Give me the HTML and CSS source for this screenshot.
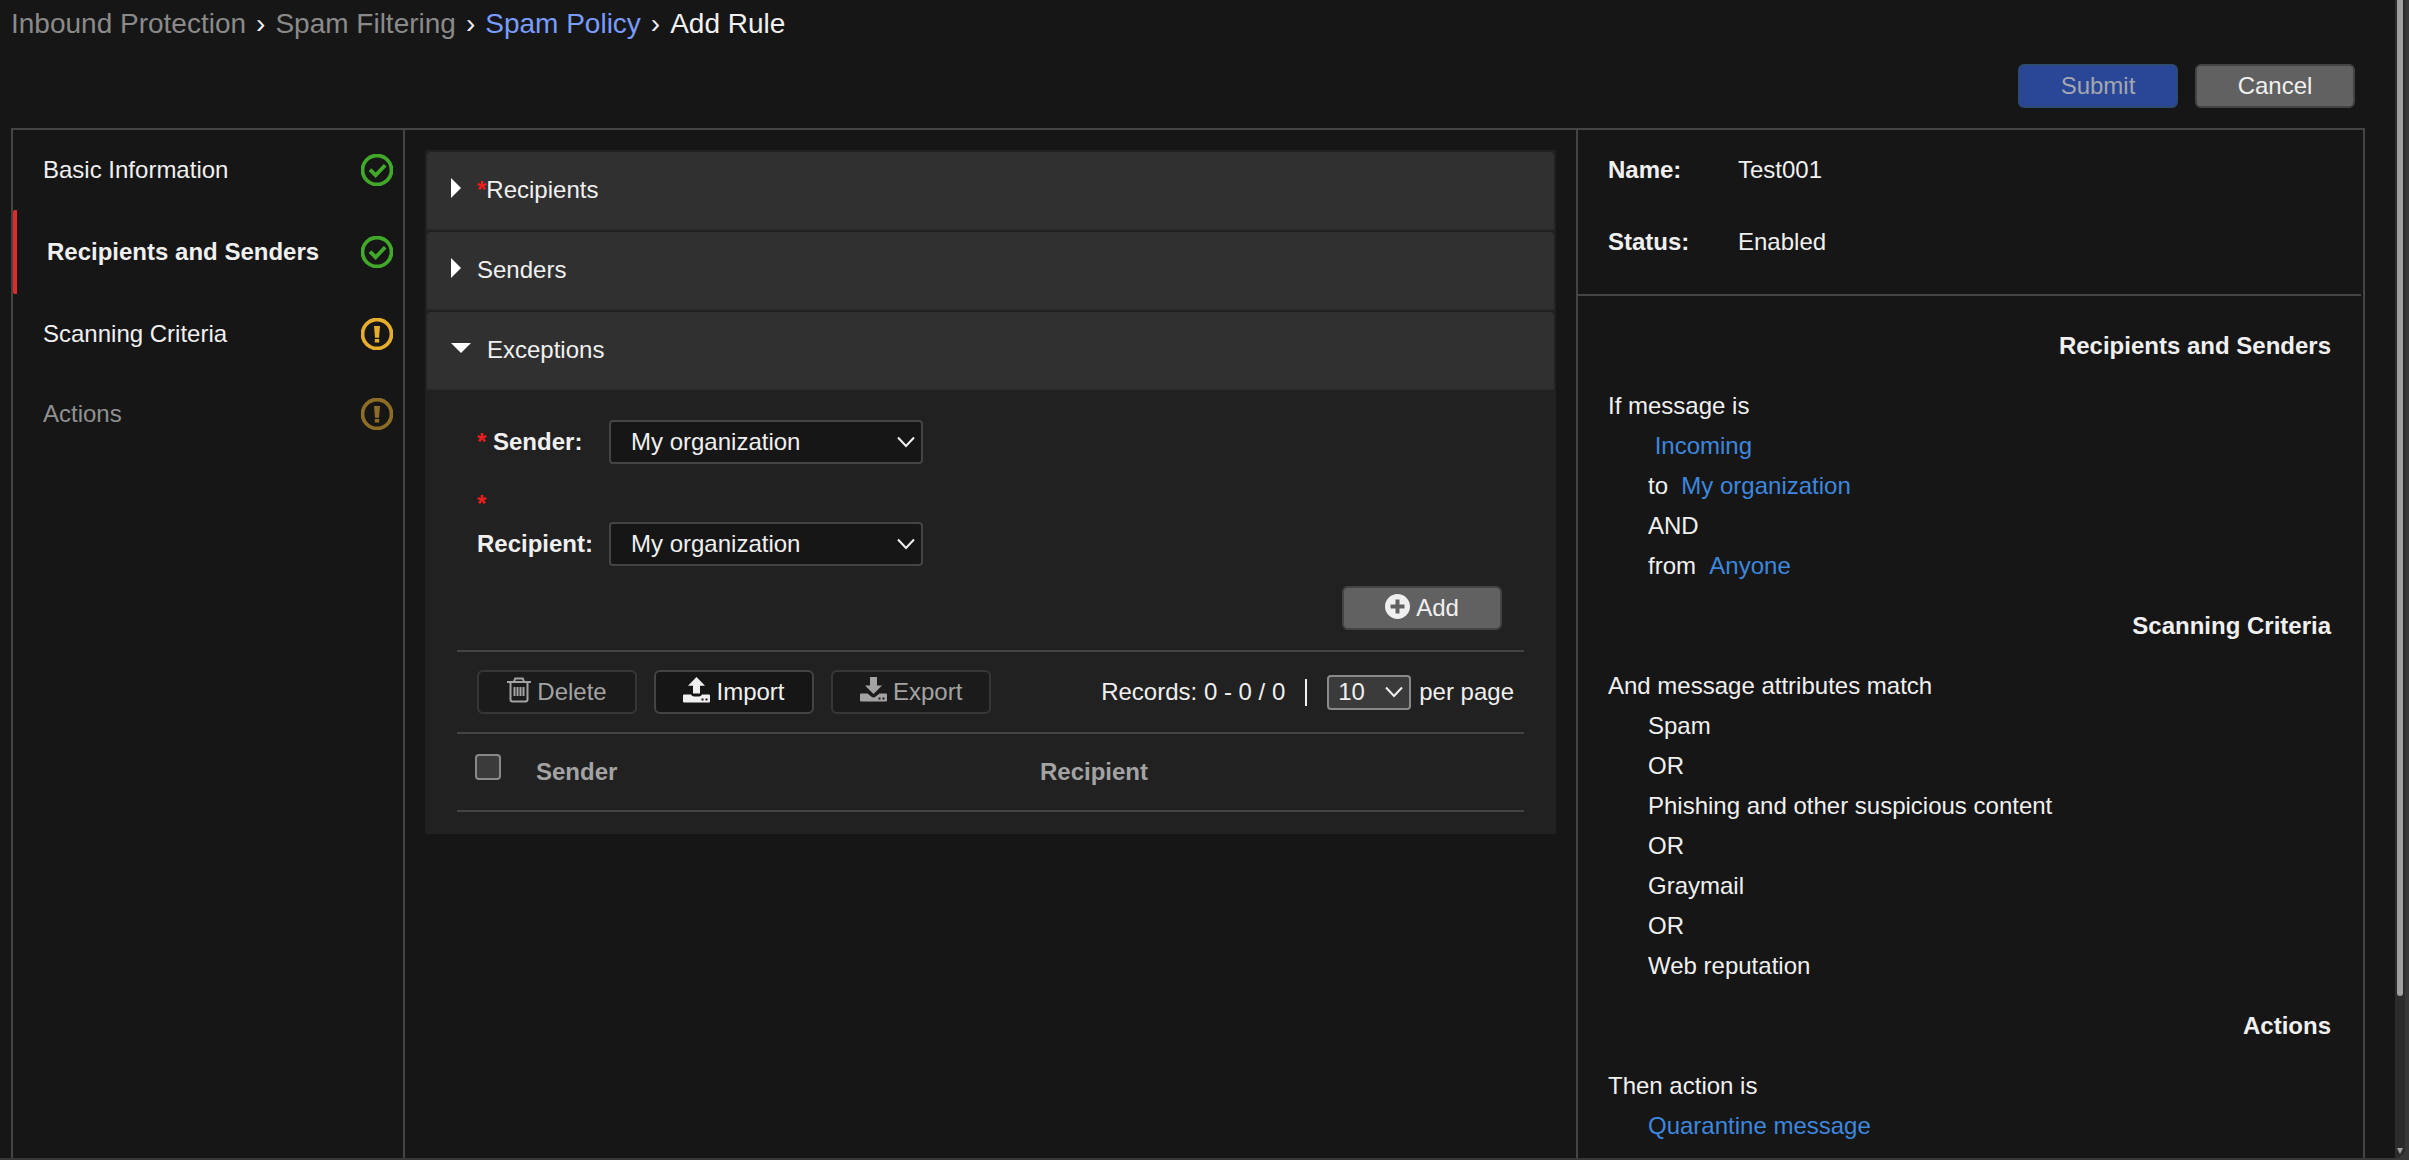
FILE: index.html
```html
<!DOCTYPE html>
<html lang="en">
<head>
<meta charset="utf-8">
<title>Add Rule - Spam Policy</title>
<link rel="stylesheet" href="styles.css">
</head>
<body>
<svg class="sprite" aria-hidden="true">
  <symbol id="icon-check" viewBox="0 0 32 32">
    <circle cx="16" cy="16" r="14.500" fill="none" stroke="currentColor" stroke-width="3.800"/>
    <path d="M9 15.600 14.600 21.200 24.200 11.200" fill="none" stroke="currentColor" stroke-width="3.800"/>
  </symbol>
  <symbol id="icon-alert" viewBox="0 0 32 32">
    <circle cx="16" cy="16" r="14.500" fill="none" stroke="currentColor" stroke-width="3.800"/>
    <path d="M13 8h6l-1 11.800h-4zM13.800 21h4.400v3.600h-4.400z" fill="currentColor"/>
  </symbol>
</svg>
<div class="window">
  <div class="page">
    <nav class="breadcrumb" aria-label="Breadcrumb">
      <span class="crumb">Inbound Protection</span><span class="crumb-sep">›</span><span class="crumb">Spam Filtering</span><span class="crumb-sep">›</span><a class="crumb crumb-link" href="#">Spam Policy</a><span class="crumb-sep">›</span><span class="crumb crumb-current">Add Rule</span>
    </nav>
    <div class="page-actions">
      <button class="btn btn-primary" type="button" disabled>Submit</button>
      <button class="btn btn-secondary" type="button">Cancel</button>
    </div>
    <div class="panel">
      <nav class="steps" aria-label="Steps">
        <a class="step" href="#">Basic Information<svg class="step-icon ok"><use href="#icon-check"/></svg></a>
        <a class="step active" href="#" aria-current="step">Recipients and Senders<svg class="step-icon ok"><use href="#icon-check"/></svg></a>
        <a class="step" href="#">Scanning Criteria<svg class="step-icon warn"><use href="#icon-alert"/></svg></a>
        <a class="step disabled" href="#" aria-disabled="true">Actions<svg class="step-icon warn"><use href="#icon-alert"/></svg></a>
      </nav>
      <main class="editor">
        <div class="accordion">
          <button class="section-head" type="button" aria-expanded="false"><span class="caret caret-right"></span><span><span class="required">*</span>Recipients</span></button>
          <button class="section-head" type="button" aria-expanded="false"><span class="caret caret-right"></span><span>Senders</span></button>
          <button class="section-head" type="button" aria-expanded="true"><span class="caret caret-down"></span><span>Exceptions</span></button>
          <div class="section-body">
            <div class="fields">
              <div class="field">
                <label class="field-label" for="sender"><span class="required">*</span> Sender:</label>
                <select class="field-select" id="sender"><option>My organization</option></select>
              </div>
              <div class="field">
                <label class="field-label" for="recipient"><span class="required">*</span> Recipient:</label>
                <select class="field-select" id="recipient"><option>My organization</option></select>
              </div>
            </div>
            <div class="add-row">
              <button class="btn btn-secondary" type="button"><svg class="icon" width="25" height="25" viewBox="0 0 25 25"><path fill="currentColor" fill-rule="evenodd" d="M12.500 0a12.500 12.500 0 1 1 0 25a12.500 12.500 0 1 1 0-25zM10.500 5.500v5H5.500v4h5v5h4v-5h5v-4h-5v-5z"/></svg>Add</button>
            </div>
            <div class="toolbar">
              <button class="btn btn-outline" type="button" disabled><svg class="icon" width="24" height="26" viewBox="0 0 24 26"><path d="M0 5h24M7 4.500 8.200 1.500h7.600L17 4.500M3.500 5v17.500q0 2 2 2h13q2 0 2-2V5M7.500 10v9M10.500 10v9M13.500 10v9M16.500 10v9" fill="none" stroke="currentColor" stroke-width="2"/></svg>Delete</button>
              <button class="btn btn-outline" type="button"><svg class="icon" width="27" height="26" viewBox="0 0 27 26"><path fill="currentColor" fill-rule="evenodd" d="M13.500 0 22 8.800h-5V16.500h-7V8.800H5zM1 17.500h7q1 2 3 2h5q2 0 3-2h7q1 0 1 1v6q0 1-1 1H1q-1 0-1-1v-6q0-1 1-1zM18.500 21.500v2h2v-2zM22.500 21.500v2h2v-2z"/></svg>Import</button>
              <button class="btn btn-outline" type="button" disabled><svg class="icon" width="27" height="26" viewBox="0 0 27 26"><path fill="currentColor" fill-rule="evenodd" d="M10 0h7v8.500h5L13.500 17 5 8.500h5zM1 16.500h6.500l4 3.200q2 1.500 4 0l4-3.200H26q1 0 1 1v6q0 1-1 1H1q-1 0-1-1v-6q0-1 1-1zM18.500 20.500v2h2v-2zM22.500 20.500v2h2v-2z"/></svg>Export</button>
              <div class="pager">
                <span>Records: 0 - 0 / 0</span>
                <span class="pager-bar"></span>
                <label class="page-size"><select class="page-select"><option>10</option></select>per page</label>
              </div>
            </div>
            <table class="records">
              <thead>
                <tr>
                  <th class="select-cell"><input class="checkbox" type="checkbox" aria-label="Select all"></th>
                  <th>Sender</th>
                  <th>Recipient</th>
                </tr>
              </thead>
            </table>
          </div>
        </div>
      </main>
      <aside class="summary">
        <dl class="summary-info">
          <dt>Name:</dt><dd>Test001</dd>
          <dt>Status:</dt><dd>Enabled</dd>
        </dl>
        <div class="summary-rules">
          <section>
            <h2>Recipients and Senders</h2>
            <p>If message is</p>
            <ul>
              <li>&nbsp;<a href="#">Incoming</a></li>
              <li>to &nbsp;<a href="#">My organization</a></li>
              <li>AND</li>
              <li>from &nbsp;<a href="#">Anyone</a></li>
            </ul>
          </section>
          <section>
            <h2>Scanning Criteria</h2>
            <p>And message attributes match</p>
            <ul>
              <li>Spam</li>
              <li>OR</li>
              <li>Phishing and other suspicious content</li>
              <li>OR</li>
              <li>Graymail</li>
              <li>OR</li>
              <li>Web reputation</li>
            </ul>
          </section>
          <section>
            <h2>Actions</h2>
            <p>Then action is</p>
            <ul>
              <li><a href="#">Quarantine message</a></li>
            </ul>
          </section>
        </div>
      </aside>
    </div>
  </div>
  <div class="scroll-track" aria-hidden="true"><div class="scroll-thumb"></div><div class="scroll-arrow"></div></div>
</div>
</body>
</html>
```
FILE: styles.css
```css
* { box-sizing: border-box; }

body {
  margin: 0;
  padding: 0 4px 2px 0;
  background: #383838;
  color: #f0f0f0;
  font: 24px/40px "Liberation Sans", Arial, sans-serif;
}

button, select { font: inherit; color: inherit; }
a { color: #3d87de; text-decoration: none; }

.sprite { display: none; }

.window {
  display: flex;
  min-height: calc(100vh - 2px);
  background: #161616;
  border-bottom-right-radius: 10px;
  overflow: hidden;
}

.page {
  flex: 1;
  display: flex;
  flex-direction: column;
  padding: 0 30px 0 11px;
}

/* Decorative scroll bar at the window edge */
.scroll-track {
  display: flex;
  flex-direction: column;
  align-items: center;
  justify-content: space-between;
  width: 10px;
  background: #2c2c2c;
}
.scroll-thumb {
  width: 6px;
  height: 86%;
  border-radius: 0 0 3px 3px;
  background: #9f9f9f;
}
.scroll-arrow {
  margin-bottom: 4px;
  border: 3px solid transparent;
  border-top: 6px solid #9f9f9f;
  border-bottom: 0;
}

/* Header */
.breadcrumb { font-size: 28px; line-height: 48px; }
.crumb { color: #8a8a8a; }
.crumb-link { color: #7a9cff; }
.crumb-current { color: #f0f0f0; }
.crumb-sep { margin: 0 10px; }

.page-actions {
  display: flex;
  justify-content: flex-end;
  gap: 17px;
  padding: 16px 10px 20px 0;
}

.btn {
  display: inline-flex;
  align-items: center;
  justify-content: center;
  gap: 6px;
  min-width: 160px;
  height: 44px;
  padding: 0 28px;
  border: 2px solid #444;
  border-radius: 6px;
}
.btn-primary { background: #2a4696; border-color: #2c4a75; color: #a3a7b0; }
.btn-secondary { background: #616161; }
.btn-outline { padding: 0 27px; background: #161616; }
.btn-outline:disabled { background: #1b1b1b; border-color: #363636; color: #a3a3a3; }
.icon { flex: none; margin-bottom: 4px; }

/* Three columns: steps, editor, summary */
.panel {
  flex: 1;
  display: grid;
  grid-template-columns: 392fr 1171fr 787fr;
  border: 2px solid #444;
  border-bottom: 0;
}

.steps { border-right: 2px solid #444; }
.step {
  display: flex;
  align-items: center;
  justify-content: space-between;
  height: 80px;
  padding: 0 10px 0 30px;
  color: inherit;
}
.step.active {
  height: 84px;
  border-left: 4px solid #e02a2a;
  border-radius: 2px;
  font-weight: bold;
}
.step.disabled { color: #919191; }
.step-icon { width: 32px; height: 32px; }
.ok { color: #41a829; }
.warn { color: #e6ad2c; }
.disabled .warn { color: #8d6d25; }

.editor { padding: 20px; }
.accordion { padding: 2px; background: #212121; }

.section-head {
  display: flex;
  align-items: center;
  gap: 16px;
  width: 100%;
  height: 78px;
  margin-bottom: 2px;
  padding: 0 24px;
  border: 0;
  border-bottom: 2px solid #2c2c2c;
  border-radius: 4px 4px 0 0;
  background: #303030;
}
.caret { margin-bottom: 4px; border: 10px solid transparent; }
.caret-right { border-left-color: #fff; border-right: 0; }
.caret-down { border-top-color: #fff; border-bottom: 0; }
.required { color: #ef1d1d; font-weight: bold; }

.section-body { padding: 28px 30px 20px; }
.fields {
  display: flex;
  flex-direction: column;
  gap: 20px;
  padding-left: 20px;
}
.field { display: flex; align-items: flex-end; gap: 12px; }
.field-label { width: 120px; padding-bottom: 2px; font-weight: bold; }
.field-select,
.page-select {
  appearance: none;
  border: 2px solid #444;
  border-radius: 4px;
  background: #161616 url("data:image/svg+xml,%3Csvg xmlns='http://www.w3.org/2000/svg' width='18' height='12'%3E%3Cpath d='M1 1.500 9 10 17 1.500' fill='none' stroke='%23f0f0f0' stroke-width='2'/%3E%3C/svg%3E") no-repeat right 6px center;
}
.field-select { width: 314px; height: 44px; padding: 0 30px 0 20px; }

.add-row {
  display: flex;
  justify-content: flex-end;
  padding: 20px 22px;
}

.toolbar {
  display: flex;
  align-items: center;
  gap: 17px;
  height: 84px;
  padding: 0 10px 0 20px;
  border: solid #444;
  border-width: 2px 0;
}
.pager { display: flex; align-items: center; gap: 20px; margin-left: auto; }
.pager-bar { width: 2px; height: 27px; background: #f0f0f0; }
.page-size { display: flex; align-items: center; gap: 8px; }
.page-select {
  width: 84px;
  height: 35px;
  padding: 0 26px 0 9px;
  border-color: #8a8a8a;
  background-color: #3b3b3b;
  line-height: 30px;
}

.records {
  width: 100%;
  table-layout: fixed;
  border-collapse: separate;
  border-spacing: 0;
  border-bottom: 2px solid #444;
}
.records th {
  height: 76px;
  padding: 0 0 0 20px;
  color: #a3a3a3;
  text-align: left;
}
.records .select-cell { width: 59px; padding: 20px 0 0 18px; vertical-align: top; }
.checkbox {
  appearance: none;
  display: block;
  width: 26px;
  height: 26px;
  margin: 0;
  border: 2px solid #8a8a8a;
  border-radius: 4px;
  background: #3b3b3b;
}

/* Summary */
.summary { border-left: 2px solid #444; }
.summary-info {
  display: grid;
  grid-template-columns: 130px 1fr;
  row-gap: 32px;
  margin: 0 2px 0 0;
  padding: 20px 30px 32px;
  border-bottom: 2px solid #444;
}
.summary-info dt { font-weight: bold; }
.summary-info dd { margin: 0; }
.summary-rules { padding: 10px 32px 12px 30px; }
.summary h2 {
  margin: 20px 0;
  font-size: 24px;
  line-height: 40px;
  text-align: right;
}
.summary p { margin: 0; }
.summary ul { margin: 0; padding-left: 40px; list-style: none; }
```
